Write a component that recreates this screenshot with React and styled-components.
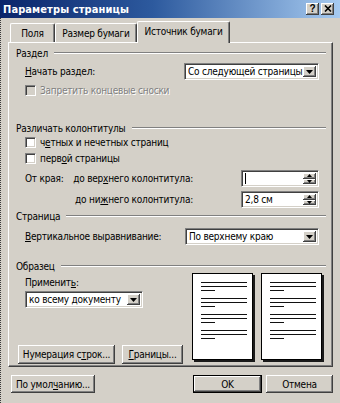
import React from 'react';
import styled, { createGlobalStyle, css } from 'styled-components';

const Global = createGlobalStyle`
  html, body { margin: 0; padding: 0; background: #d4d0c8; }
  body {
    font-family: "DejaVu Sans Condensed", "DejaVu Sans", sans-serif;
    font-size: 10px;
    letter-spacing: -0.22px;
    color: #000;
  }
  * { box-sizing: border-box; }
`;

const raised = css`
  background: #d4d0c8;
  box-shadow: inset -1px -1px #404040, inset 1px 1px #ffffff, inset -2px -2px #808080, inset 2px 2px #d4d0c8;
`;

const sunken = css`
  border: 1px solid;
  border-color: #808080 #ffffff #ffffff #808080;
  box-shadow: inset 1px 1px #404040, inset -1px -1px #d4d0c8;
`;

const Window = styled.div`
  width: 340px;
  height: 403px;
  background: #d4d0c8;
  display: flex;
  flex-direction: column;
  overflow: hidden;
`;

const TitleBar = styled.div`
  height: 18px;
  flex: none;
  display: flex;
  align-items: center;
  justify-content: space-between;
  padding: 0 6px 0 3px;
  background: linear-gradient(90deg, #0a246a 0%, #2d5a9e 45%, #a6caf0 100%);
`;

const Title = styled.div`
  color: #fff;
  font-weight: bold;
  font-size: 11px;
  letter-spacing: 0.1px;
`;

const CapGroup = styled.div`
  display: flex;
  gap: 2px;
`;

const CapBtn = styled.div`
  ${raised};
  width: 13px;
  height: 12px;
  display: flex;
  align-items: center;
  justify-content: center;
  font-family: "Liberation Sans", sans-serif;
  font-weight: bold;
  font-size: 10px;
  line-height: 1;
  color: #000;
  padding-bottom: 1px;
`;

const Body = styled.div`
  flex: 1;
  display: flex;
  flex-direction: column;
  padding: 3px 7px 0 7px;
  border-left: 1px dotted #3a3a3a;
`;

const Tabs = styled.div`
  display: flex;
  align-items: flex-end;
  height: 21px;
  padding-left: 2px;
  position: relative;
  z-index: 1;
`;

const Tab = styled.div`
  width: ${p => p.$w}px;
  height: ${p => (p.$active ? 22 : 19)}px;
  margin-bottom: ${p => (p.$active ? -1 : 0)}px;
  display: flex;
  align-items: center;
  justify-content: center;
  padding-bottom: ${p => (p.$active ? 2 : 0)}px;
  background: #d4d0c8;
  border-top: 1px solid #fff;
  border-left: 1px solid #fff;
  border-right: 1px solid #404040;
  border-radius: 2px 2px 0 0;
  box-shadow: inset -1px 0 #808080;
`;

const Panel = styled.div`
  width: 325px;
  height: 325px;
  flex: none;
  display: flex;
  flex-direction: column;
  padding: 0 6px 2px 7px;
  border: 1px solid;
  border-color: #fff #404040 #404040 #fff;
  box-shadow: inset -1px -1px #808080;
`;

const GroupHead = styled.div`
  margin-top: ${p => p.$mt}px;
  height: 12px;
  display: flex;
  align-items: center;
  gap: 6px;
  white-space: nowrap;
`;

const Rule = styled.div`
  flex: 1;
  height: 2px;
  border-top: 1px solid #808080;
  border-bottom: 1px solid #fff;
`;

const FieldRow = styled.div`
  margin-top: ${p => p.$mt}px;
  height: 17px;
  display: flex;
  align-items: center;
  justify-content: space-between;
  padding: 0 7px 0 9px;
  white-space: nowrap;
`;

const Acc = styled.span`
  text-decoration: underline;
  text-underline-offset: 1px;
`;

const CheckRow = styled.div`
  margin-top: ${p => p.$mt}px;
  height: 14px;
  display: flex;
  align-items: center;
  gap: 4px;
  padding-left: 9px;
  white-space: nowrap;
  color: ${p => (p.$disabled ? '#808080' : '#000')};
  text-shadow: ${p => (p.$disabled ? '1px 1px 0 #fff' : 'none')};
`;

const CheckBox = styled.div`
  width: 11px;
  height: 11px;
  flex: none;
  background: ${p => (p.$disabled ? '#d4d0c8' : '#fff')};
  ${sunken};
`;

const SpinRow = styled.div`
  margin-top: ${p => p.$mt}px;
  height: 17px;
  display: flex;
  align-items: center;
  padding: 0 7px 0 9px;
  white-space: nowrap;
`;

const SideLabel = styled.div`
  width: 47px;
`;

const KeyLabel = styled.div`
  width: 121px;
  text-align: right;
`;

const Field = styled.div`
  width: ${p => p.$w}px;
  height: ${p => p.$h || 17}px;
  background: #fff;
  ${sunken};
  display: flex;
  align-items: stretch;
  padding: 2px;
  margin-left: ${p => (p.$push ? 'auto' : '0')};
`;

const FieldText = styled.div`
  flex: 1;
  display: flex;
  align-items: center;
  padding-left: 1px;
  white-space: nowrap;
  overflow: hidden;
`;

const Caret = styled.div`
  width: 1px;
  height: 11px;
  background: #000;
`;

const ArrowBtn = styled.div`
  ${raised};
  width: 13px;
  flex: none;
  display: flex;
  align-items: center;
  justify-content: center;
`;

const SpinCol = styled.div`
  width: 13px;
  flex: none;
  display: flex;
  flex-direction: column;
`;

const SpinBtn = styled.div`
  ${raised};
  flex: 1;
  display: flex;
  align-items: center;
  justify-content: center;
`;

const SampleBody = styled.div`
  flex: 1;
  display: flex;
  justify-content: space-between;
  padding-right: 4px;
`;

const LeftCol = styled.div`
  display: flex;
  flex-direction: column;
`;

const SubLabel = styled.div`
  margin-top: 5px;
  height: 12px;
  line-height: 12px;
  padding-left: 9px;
`;

const ComboWrap = styled.div`
  margin-top: 2px;
  padding-left: 9px;
`;

const ButtonRow = styled.div`
  margin-top: auto;
  display: flex;
  gap: 7px;
  padding-left: 2px;
`;

const PushButton = styled.div`
  width: ${p => p.$w}px;
  height: ${p => p.$h || 19}px;
  ${raised};
  display: flex;
  align-items: center;
  justify-content: center;
  white-space: nowrap;
  ${p =>
    p.$default &&
    css`
      border: 1px solid #000;
      box-shadow: inset -1px -1px #404040, inset 1px 1px #ffffff, inset -2px -2px #808080;
    `}
`;

const Pages = styled.div`
  margin-top: 1px;
  display: flex;
  gap: 8px;
  align-items: flex-start;
`;

const Page = styled.div`
  width: 61px;
  height: 87px;
  background: #fff;
  border: 1px solid #000;
  box-shadow: 2px 2px 0 #1a1a1a;
  padding: 8px 5px 0 8px;
  display: flex;
  flex-direction: column;
  gap: 7px;
`;

const Para = styled.div`
  display: flex;
  flex-direction: column;
  gap: 3px;
`;

const TextLine = styled.div`
  height: 1px;
  background: #111;
  width: ${p => (p.$short ? '14px' : '100%')};
`;

const BottomRow = styled.div`
  margin-top: 8px;
  display: flex;
  align-items: center;
  padding-left: 3px;
  gap: 4px;
`;

const Spacer = styled.div`
  flex: 1;
`;

function Tri({ w = 7, h = 4, up = false }) {
  const pts = up ? `0,${h} ${w},${h} ${w / 2},0` : `0,0 ${w},0 ${w / 2},${h}`;
  return (
    <svg width={w} height={h} viewBox={`0 0 ${w} ${h}`} style={{ display: 'block' }}>
      <polygon points={pts} fill="#000" />
    </svg>
  );
}

function Combo({ w, children }) {
  return (
    <Field $w={w}>
      <FieldText>{children}</FieldText>
      <ArrowBtn>
        <Tri w={7} h={4} />
      </ArrowBtn>
    </Field>
  );
}

function Spin({ children }) {
  return (
    <Field $w={78} $push>
      <FieldText>{children}</FieldText>
      <SpinCol>
        <SpinBtn>
          <Tri w={5} h={3} up />
        </SpinBtn>
        <SpinBtn>
          <Tri w={5} h={3} />
        </SpinBtn>
      </SpinCol>
    </Field>
  );
}

function PreviewPage() {
  return (
    <Page>
      {[0, 1, 2, 3].map(i => (
        <Para key={i}>
          <TextLine />
          <TextLine />
          <TextLine $short />
        </Para>
      ))}
    </Page>
  );
}

export default function App() {
  return (
    <>
      <Global />
      <Window>
        <TitleBar>
          <Title>Параметры страницы</Title>
          <CapGroup>
            <CapBtn>?</CapBtn>
            <CapBtn>
              <svg width="8" height="7" viewBox="0 0 8 7" style={{ display: 'block' }}>
                <path d="M1 0.5 L7 6.5 M7 0.5 L1 6.5" stroke="#000" strokeWidth="1.6" />
              </svg>
            </CapBtn>
          </CapGroup>
        </TitleBar>
        <Body>
          <Tabs>
            <Tab $w={45}>Поля</Tab>
            <Tab $w={82}>Размер бумаги</Tab>
            <Tab $w={93} $active>Источник бумаги</Tab>
          </Tabs>
          <Panel>
            <GroupHead $mt={4}>
              <span>Раздел</span>
              <Rule />
            </GroupHead>
            <FieldRow $mt={4}>
              <span>
                <Acc>Н</Acc>ачать раздел:
              </span>
              <Combo w={135}>Со следующей страницы</Combo>
            </FieldRow>
            <CheckRow $mt={3} $disabled>
              <CheckBox $disabled />
              <span>Запретить концевые сноски</span>
            </CheckRow>

            <GroupHead $mt={25}>
              <span>Различать колонтитулы</span>
              <Rule />
            </GroupHead>
            <CheckRow $mt={1}>
              <CheckBox />
              <span>
                ч<Acc>е</Acc>тных и нечетных страниц
              </span>
            </CheckRow>
            <CheckRow $mt={2}>
              <CheckBox />
              <span>
                перв<Acc>о</Acc>й страницы
              </span>
            </CheckRow>
            <SpinRow $mt={5}>
              <SideLabel>От края:</SideLabel>
              <KeyLabel>
                до вер<Acc>х</Acc>него колонтитула:
              </KeyLabel>
              <Spin>
                <Caret />
              </Spin>
            </SpinRow>
            <SpinRow $mt={4}>
              <SideLabel />
              <KeyLabel>
                до ни<Acc>ж</Acc>него колонтитула:
              </KeyLabel>
              <Spin>2,8 см</Spin>
            </SpinRow>

            <GroupHead $mt={2}>
              <span>Страница</span>
              <Rule />
            </GroupHead>
            <FieldRow $mt={6}>
              <span>
                <Acc>В</Acc>ертикальное выравнивание:
              </span>
              <Combo w={134}>По верхнему краю</Combo>
            </FieldRow>

            <GroupHead $mt={15}>
              <span>Образец</span>
              <Rule />
            </GroupHead>
            <SampleBody>
              <LeftCol>
                <SubLabel>
                  Применит<Acc>ь</Acc>:
                </SubLabel>
                <ComboWrap>
                  <Combo w={118}>ко всему документу</Combo>
                </ComboWrap>
                <ButtonRow>
                  <PushButton $w={97}>
                    Нумерация с<Acc>т</Acc>рок...
                  </PushButton>
                  <PushButton $w={61}>
                    <Acc>Г</Acc>раницы...
                  </PushButton>
                </ButtonRow>
              </LeftCol>
              <Pages>
                <PreviewPage />
                <PreviewPage />
              </Pages>
            </SampleBody>
          </Panel>
          <BottomRow>
            <PushButton $w={84} $h={18}>
              По умол<Acc>ч</Acc>анию...
            </PushButton>
            <Spacer />
            <PushButton $w={69} $h={18} $default>
              OK
            </PushButton>
            <PushButton $w={67} $h={18}>
              Отмена
            </PushButton>
          </BottomRow>
        </Body>
      </Window>
    </>
  );
}
